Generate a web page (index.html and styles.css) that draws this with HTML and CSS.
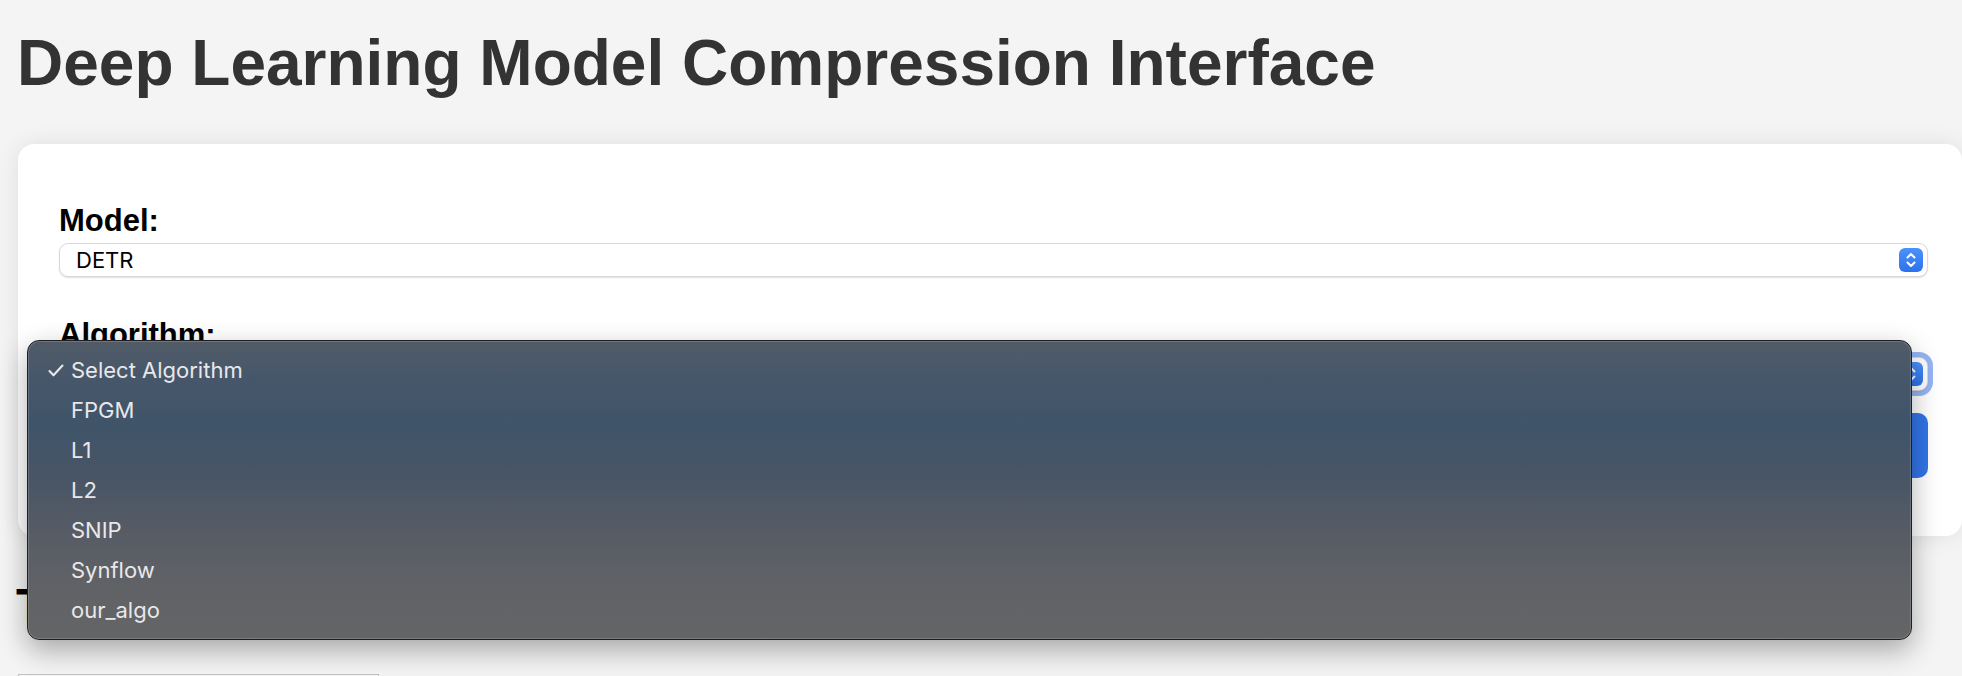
FILE: index.html
```html
<!DOCTYPE html>
<html>
<head>
<meta charset="utf-8">
<title>Deep Learning Model Compression Interface</title>
<link rel="stylesheet" href="styles.css">
</head>
<body>
<h1 class="title">Deep Learning Model Compression Interface</h1>
<div class="card">
  <div class="field">
    <label class="label">Model:</label>
    <div class="select">
      <span class="select-value">DETR</span>
      <span class="stepper">
        <svg width="24" height="24" viewBox="0 0 24 24"><path d="M8.5 9.5 L12 6 L15.5 9.5" fill="none" stroke="#fff" stroke-width="2" stroke-linecap="round" stroke-linejoin="round"/><path d="M8.5 14.5 L12 18 L15.5 14.5" fill="none" stroke="#fff" stroke-width="2" stroke-linecap="round" stroke-linejoin="round"/></svg>
      </span>
    </div>
  </div>
  <div class="field field-last">
    <label class="label">Algorithm:</label>
    <div class="select select-focus">
      <span class="select-value">Select Algorithm</span>
      <span class="stepper">
        <svg width="24" height="24" viewBox="0 0 24 24"><path d="M8.5 9.5 L12 6 L15.5 9.5" fill="none" stroke="#fff" stroke-width="2" stroke-linecap="round" stroke-linejoin="round"/><path d="M8.5 14.5 L12 18 L15.5 14.5" fill="none" stroke="#fff" stroke-width="2" stroke-linecap="round" stroke-linejoin="round"/></svg>
      </span>
    </div>
  </div>
  <button class="btn">Compress Model</button>
</div>
<h2 class="subtitle">Training Progress</h2>
<div class="log-box"></div>

<div class="menu">
  <div class="menu-item selected">
    <svg class="check" width="16" height="13" viewBox="0 0 16 13"><path d="M1.5 7 L5.5 11.3 L14.5 1.5" fill="none" stroke="#e8e8ea" stroke-width="2.1" stroke-linecap="round" stroke-linejoin="round"/></svg>
    <span>Select Algorithm</span>
  </div>
  <div class="menu-item"><span>FPGM</span></div>
  <div class="menu-item"><span>L1</span></div>
  <div class="menu-item"><span>L2</span></div>
  <div class="menu-item"><span>SNIP</span></div>
  <div class="menu-item"><span>Synflow</span></div>
  <div class="menu-item"><span>our_algo</span></div>
</div>
</body>
</html>
```

FILE: styles.css
```css
html, body {
  margin: 0;
  padding: 0;
}
body {
  background: #f4f4f4;
  font-family: "Liberation Sans", Arial, sans-serif;
  overflow: hidden;
  height: 676px;
  position: relative;
}
.title {
  margin: 27px 0 0 17px;
  font-size: 64px;
  line-height: 72px;
  font-weight: bold;
  color: #333333;
  white-space: nowrap;
}
.card {
  margin: 45px 0 0 18px;
  width: 1944px;
  box-sizing: border-box;
  padding: 59px 34px 58px 41px;
  background: #ffffff;
  border-radius: 16px;
  box-shadow: 0 0 22px rgba(0, 0, 0, 0.09);
}
.field {
  display: flex;
  flex-direction: column;
  gap: 4px;
  margin-bottom: 40px;
}
.field-last {
  margin-bottom: 22px;
}
.label {
  font-family: "Liberation Sans", Arial, sans-serif;
  font-weight: bold;
  font-size: 31px;
  line-height: 36px;
  color: #000;
}
.select {
  height: 34px;
  box-sizing: border-box;
  border: 1px solid #d9d9d9;
  border-radius: 9px;
  box-shadow: 0 1px 1.5px rgba(0, 0, 0, 0.12);
  background: #fff;
  display: flex;
  align-items: center;
  justify-content: space-between;
  padding: 0 4px 0 16px;
}
.select-focus {
  outline: 5px solid rgba(62, 120, 235, 0.55);
  outline-offset: 0;
}
.select-value {
  font-family: Inter, "Noto Sans", sans-serif;
  font-size: 22px;
  color: #000;
}
.stepper {
  width: 24px;
  height: 24px;
  border-radius: 6px;
  background: linear-gradient(#4b93f9, #2d71ee);
  display: flex;
}
.btn {
  display: block;
  width: 100%;
  height: 65px;
  border: none;
  border-radius: 10px;
  background: #3274e8;
  color: #fff;
  font-family: "Liberation Sans", Arial, sans-serif;
  font-size: 32px;
}
.subtitle {
  margin: 42px 0 0 16px;
  font-size: 48px;
  line-height: 56px;
  font-weight: bold;
  color: #000;
}
.log-box {
  margin: 40px 0 0 18px;
  width: 361px;
  height: 60px;
  border: 1px solid #c2c2c2;
  box-sizing: border-box;
  background: #f4f4f4;
}
.menu {
  position: absolute;
  left: 27px;
  top: 340px;
  width: 1885px;
  height: 300px;
  box-sizing: border-box;
  border: 1px solid #1f1f21;
  border-radius: 12px;
  background: linear-gradient(180deg, #515b67 0%, #47576a 12%, #3f5469 28%, #485565 45%, #575c65 65%, #606265 82%, #646567 100%);
  box-shadow: inset 0 0 0 1px rgba(255, 255, 255, 0.16), 0 10px 28px rgba(0, 0, 0, 0.32);
  padding-top: 9px;
}
.menu-item {
  height: 40px;
  display: flex;
  align-items: center;
  padding-left: 43px;
  position: relative;
  font-family: Inter, "Noto Sans", sans-serif;
  font-size: 22px;
  color: #e8e8ea;
}
.check {
  position: absolute;
  left: 20px;
  top: 14px;
}
```
